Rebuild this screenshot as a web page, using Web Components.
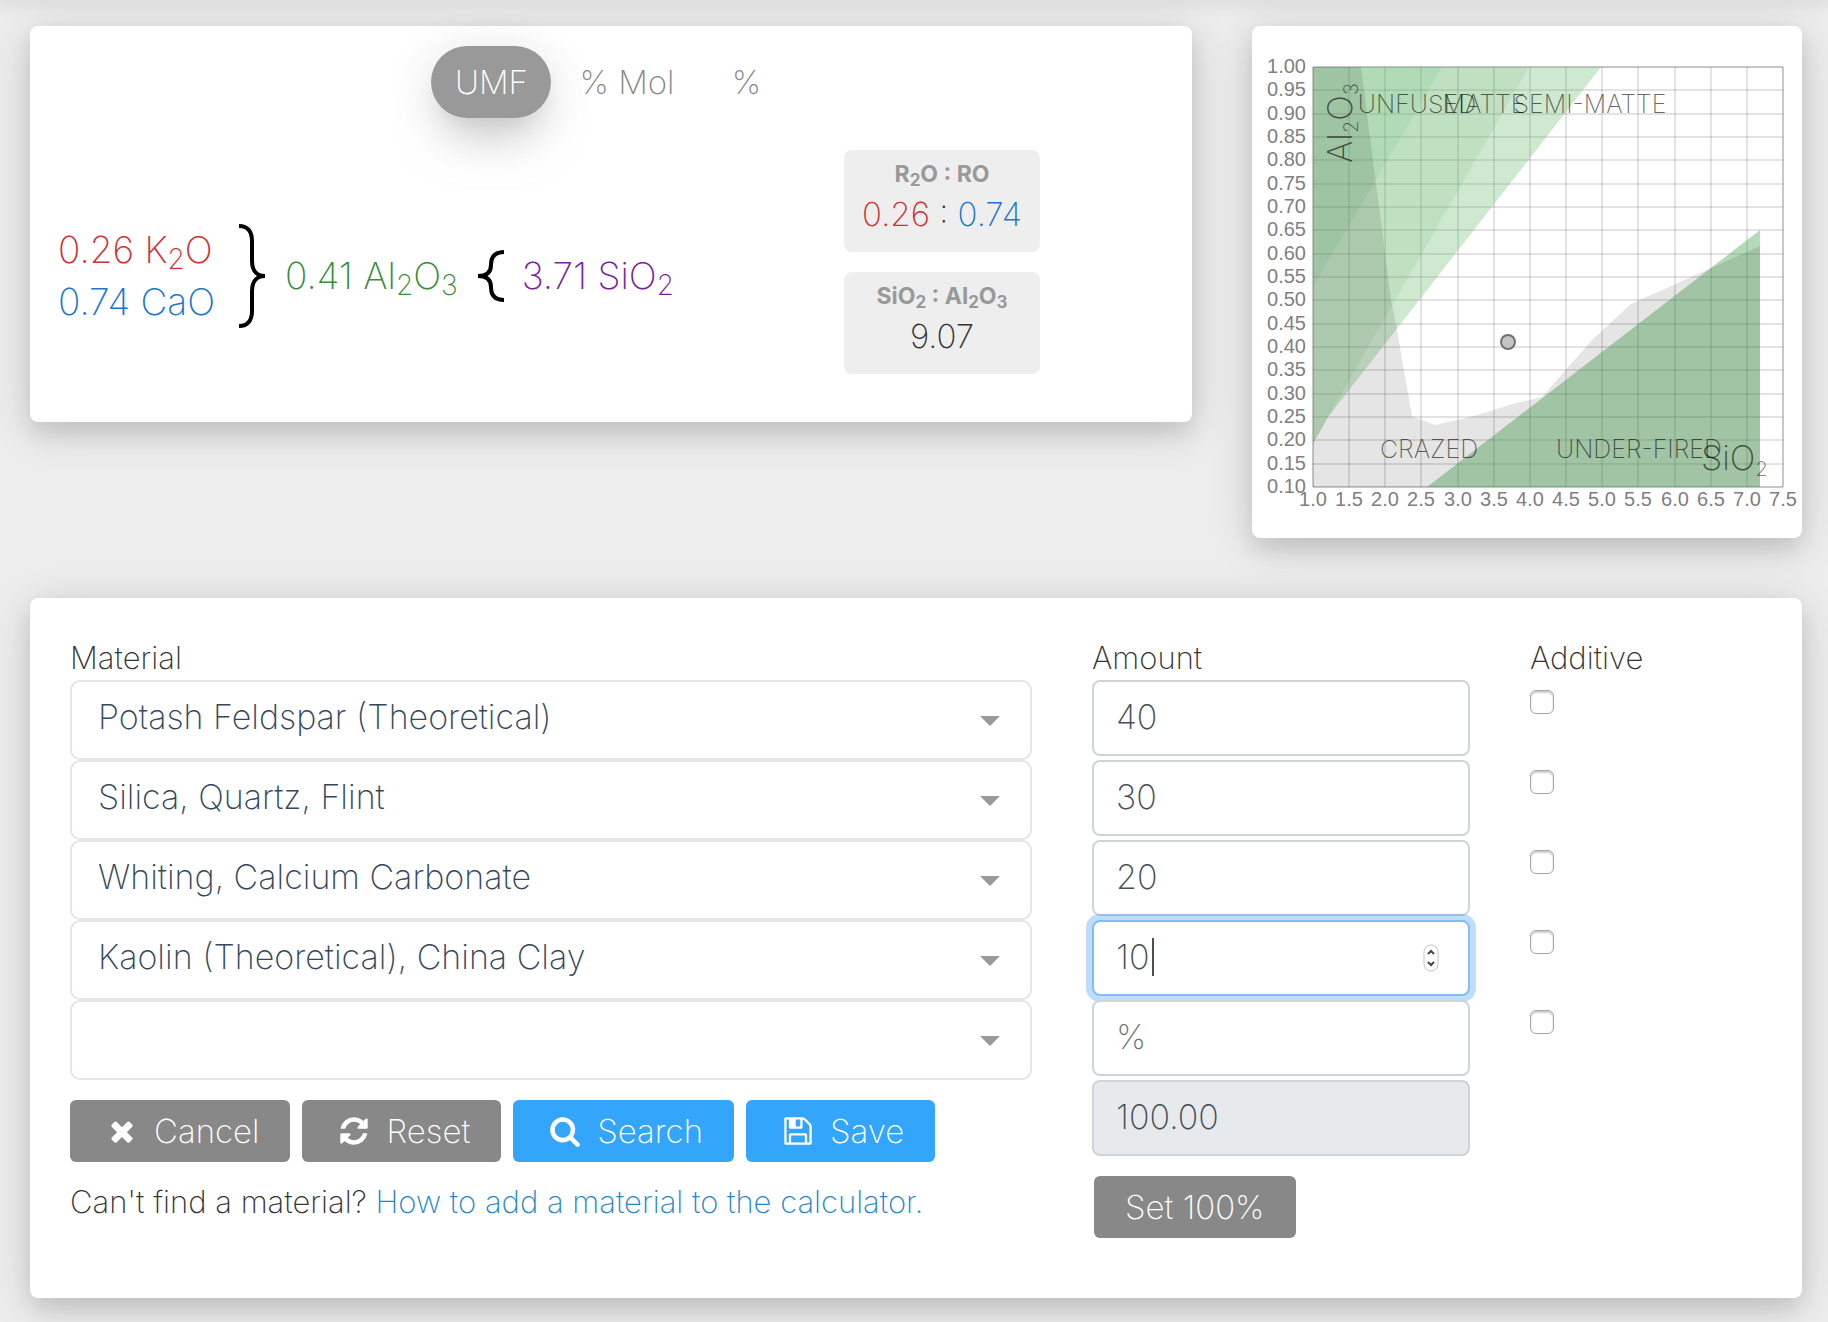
<!DOCTYPE html>
<html lang="en">
<head>
<meta charset="utf-8">
<title>Glaze calculator</title>
<style>
  html { background: #ededed; }
  body { margin: 0; color: #333; font: 250 31px/40px Inter, "Open Sans", sans-serif; }
</style>
</head>
<body>
<glaze-calculator></glaze-calculator>
<script>
const define = (tag, render) => customElements.define(tag, class extends HTMLElement {
  connectedCallback() {
    if (this.shadowRoot) return;
    const root = this.attachShadow({ mode: "open" });
    root.innerHTML = typeof render === "function" ? render(this) : render;
  }
});

/* ---------- white raised surface ---------- */
define("surface-card", `
<style>
  :host { display: block; background: #fff; border-radius: 8px;
    box-shadow: 0 8px 44px rgba(0,0,0,.16), 0 12px 20px rgba(0,0,0,.08); }
</style>
<slot></slot>`);

/* ---------- unit switcher ---------- */
define("unit-tabs", `
<style>
  :host { display: flex; justify-content: center; gap: 6px; }
  button { min-width: 88px; height: 72px; padding: 0 22px 1px; border: 0; border-radius: 36px; background: none;
    color: #888; font: inherit; font-size: 33px; }
  button[aria-pressed=true] { min-width: 120px; background: #999; color: #fff;
    box-shadow: 0 32px 52px -20px rgba(153,153,153,.56), 0 8px 50px rgba(0,0,0,.12), 0 16px 20px -10px rgba(153,153,153,.2); }
</style>
<button type="button" aria-pressed="true">UMF</button>
<button type="button" aria-pressed="false">% Mol</button>
<button type="button" aria-pressed="false">%</button>`);

/* ---------- unity formula ---------- */
define("umf-formula", `
<style>
  :host { display: flex; align-items: center; font-size: 37px; line-height: 52px; white-space: nowrap; }
  sub { font-size: 28px; line-height: 0; vertical-align: -6px; }
  svg { display: block; flex: none; fill: none; stroke: #000; stroke-width: 4; }
  .r2o { color: #d32f2f; } .ro { color: #1976d2; } .r2o3 { color: #388e3c; } .ro2 { color: #7b1fa2; }
  .open { margin: 0 20px 0 24px; } .close { margin: 0 18px 0 20px; }
</style>
<div><div class="r2o">0.26 K<sub>2</sub>O</div><div class="ro">0.74 CaO</div></div>
<svg class="open" width="26" height="104" viewBox="0 0 26 104"><path d="M0 2C9 2 13 8 13 17V37C13 47 18 52 26 52C18 52 13 57 13 67V87C13 96 9 102 0 102"/></svg>
<div class="r2o3">0.41 Al<sub>2</sub>O<sub>3</sub></div>
<svg class="close" width="26" height="52" viewBox="0 0 26 52"><path d="M26 2C17 2 13 7 13 15C13 22 9 26 0 26C9 26 13 30 13 37C13 45 17 50 26 50"/></svg>
<div class="ro2">3.71 SiO<sub>2</sub></div>`);

/* ---------- ratio tile ---------- */
define("ratio-box", `
<style>
  :host { display: block; box-sizing: border-box; width: 196px; height: 102px; padding: 8px 0; border-radius: 8px;
    background: #eee; text-align: center; font-size: 33px; line-height: 48px; }
  .title { color: #999; font-size: 23px; font-weight: 700; line-height: 32px; }
</style>
<div class="title"><slot name="title"></slot></div>
<div><slot></slot></div>`);

/* ---------- Stull chart ---------- */
define("stull-chart", () => {
  const x = v => Math.round(61 + (v - 1) * 470 / 6.5);
  const y = v => Math.round(461 - (v - 0.1) * 420 / 0.9);
  let lines = "", labels = "";
  for (let i = 0; i <= 13; i++) {
    const v = 1 + i / 2, edge = i === 0 || i === 13;
    lines += `<path ${edge ? 'class="edge"' : ""} d="M${x(v)} 41V461"/>`;
    labels += `<text text-anchor="middle" x="${x(v)}" y="480">${v.toFixed(1)}</text>`;
  }
  for (let i = 0; i <= 18; i++) {
    const v = 0.1 + i / 20, edge = i === 0 || i === 18;
    lines += `<path ${edge ? 'class="edge"' : ""} d="M61 ${y(v)}H531"/>`;
    labels += `<text text-anchor="end" x="54" y="${y(v) + 6}">${v.toFixed(2)}</text>`;
  }
  return `
<style>
  :host { display: block; }
  svg { display: block; width: 100%; height: auto; }
  .grid path { stroke: rgba(0,0,0,.11); stroke-width: 2; } .grid .edge { stroke: rgba(0,0,0,.22); }
  .ticks { font: 400 20px "Liberation Sans", sans-serif; fill: #808080; }
  .names { font-size: 25px; font-weight: 200; fill: rgba(0,0,0,.6); text-anchor: middle; }
  .axes { font-size: 34px; font-weight: 200; fill: rgba(0,0,0,.6); } .axes .sub { font-size: 20px; }
</style>
<svg viewBox="0 0 550 512" role="img" aria-label="Stull chart">
  <g class="grid">${lines}</g>
  <path fill="rgba(95,182,98,.3)" d="M61 41H349L76 391L61 418Z"/>
  <path fill="rgba(67,143,78,.1)" d="M61 41H277L76 391L61 418Z"/>
  <path fill="rgba(53,174,75,.1)" d="M61 41H190L61 261Z"/>
  <path fill="rgba(65,165,75,.4)" d="M175 461L508 204V461Z"/>
  <path fill="rgba(0,0,0,.1)" d="M61 41H109L139 274L145 304L160 390L183 399L222 390L264 377L290 371L340 314L379 278L508 220V461H61Z"/>
  <g class="ticks">${labels}</g>
  <g class="names">
    <text x="165" y="87">UNFUSED</text><text x="232" y="87">MATTE</text><text x="338" y="87">SEMI-MATTE</text>
    <text x="177" y="432">CRAZED</text><text x="387" y="432">UNDER-FIRED</text>
  </g>
  <g class="axes">
    <text transform="translate(100 137) rotate(-90)">Al<tspan class="sub" dy="6">2</tspan><tspan dy="-6">O</tspan><tspan class="sub" dy="6">3</tspan></text>
    <text x="449" y="444">SiO<tspan class="sub" dy="6">2</tspan></text>
  </g>
  <circle cx="256" cy="316" r="7" fill="#c4c4c4" stroke="#707070" stroke-width="2"/>
</svg>`;
});

/* ---------- buttons ---------- */
const icons = {
  times: "M1490 1322q0 40-28 68l-136 136q-28 28-68 28t-68-28l-294-294-294 294q-28 28-68 28t-68-28l-136-136q-28-28-28-68t28-68l294-294-294-294q-28-28-28-68t28-68l136-136q28-28 68-28t68 28l294 294 294-294q28-28 68-28t68 28l136 136q28 28 28 68t-28 68l-294 294 294 294q28 28 28 68z",
  refresh: "M1639 1056q0 5-1 7-64 268-268 434.5t-478 166.5q-146 0-282.5-55t-243.5-157l-129 129q-19 19-45 19t-45-19-19-45v-448q0-26 19-45t45-19h448q26 0 45 19t19 45-19 45l-137 137q71 66 161 102t187 36q134 0 250-65t186-179q11-17 53-117 8-23 30-23h192q13 0 22.5 9.5t9.5 22.5zm25-800v448q0 26-19 45t-45 19h-448q-26 0-45-19t-19-45 19-45l138-138q-148-137-349-137-134 0-250 65t-186 179q-11 17-53 117-8 23-30 23h-199q-13 0-22.5-9.5t-9.5-22.5v-7q65-268 270-434.5t480-166.5q146 0 284 55.5t245 156.5l130-129q19-19 45-19t45 19 19 45z",
  search: "M1216 832q0-185-131.5-316.5t-316.5-131.5-316.5 131.5-131.5 316.5 131.5 316.5 316.5 131.5 316.5-131.5 131.5-316.5zm512 832q0 52-38 90t-90 38q-54 0-90-38l-343-342q-179 124-399 124-143 0-273.5-55.5t-225-150-150-225-55.5-273.5 55.5-273.5 150-225 225-150 273.5-55.5 273.5 55.5 225 150 150 225 55.5 273.5q0 220-124 399l343 343q37 37 37 90z",
  save: "M512 1536h768v-384h-768v384zm896 0h128v-896q0-14-10-38.5t-20-34.5l-281-281q-10-10-34-20t-39-10v416q0 40-28 68t-68 28h-576q-40 0-68-28t-28-68v-416h-128v1280h128v-416q0-40 28-68t68-28h832q40 0 68 28t28 68v416zm-384-928v-320q0-13-9.5-22.5t-22.5-9.5h-192q-13 0-22.5 9.5t-9.5 22.5v320q0 13 9.5 22.5t22.5 9.5h192q13 0 22.5-9.5t9.5-22.5zm640 32v928q0 40-28 68t-68 28h-1344q-40 0-68-28t-28-68v-1344q0-40 28-68t68-28h928q40 0 88 20t76 48l280 280q28 28 48 76t20 88z"
};
define("action-button", el => `
<style>
  :host { display: block; }
  button { display: flex; align-items: center; gap: 16px; height: 62px; padding: 0 31px; border: 0; border-radius: 6px;
    background: #888; color: #fff; font: inherit; font-size: 33px; white-space: nowrap; }
  button.icon { padding-left: 36px; }
  :host([primary]) button { background: #33a6fb; }
  svg { width: 32px; height: 32px; fill: currentColor; }
</style>
<button type="button" class="${el.hasAttribute("icon") ? "icon" : ""}">${el.hasAttribute("icon") ? `<svg viewBox="0 0 1792 1792" aria-hidden="true"><path d="${icons[el.getAttribute("icon")]}"/></svg>` : ""}<span><slot></slot></span></button>`);

/* ---------- recipe form ---------- */
define("recipe-form", () => {
  const rows = [["Potash Feldspar (Theoretical)", "40"], ["Silica, Quartz, Flint", "30"],
    ["Whiting, Calcium Carbonate", "20"], ["Kaolin (Theoretical), China Clay", "10"], ["", ""]];
  const name = (kind, i) => i ? `aria-label="${kind} ${i + 1}"` : `id="${kind}"`;
  const selects = rows.map(([m], i) => `<div class="pick"><select ${name("Material", i)}><option>${m}</option></select></div>`).join("");
  const amounts = rows.map(([, a], i) => `<div class="amount${i === 3 ? " active" : ""}"><input type="number" placeholder="%" value="${a}" ${name("Amount", i)}>${i === 3 ?
    `<i class="caret"></i><svg class="spin" width="16" height="28" viewBox="0 0 16 28" aria-hidden="true"><rect x="1" y="1" width="14" height="26" rx="7"/><path d="M5 10l3-3 3 3M5 18l3 3 3-3"/></svg>` : ""}</div>`).join("");
  const checks = rows.map((_, i) => `<div class="check"><input type="checkbox" ${name("Additive", i)}></div>`).join("");
  return `
<style>
  :host { display: grid; grid-template-columns: 962fr 378fr 232fr; gap: 60px; padding: 40px 40px 60px; }
  label { display: block; height: 42px; line-height: 40px; }
  select, input { box-sizing: border-box; margin: 0; font: inherit; font-size: 34px; display: block; }
  .pick, .amount { position: relative; }
  .pick::after { content: ""; position: absolute; right: 32px; top: 36px; border: solid transparent; border-width: 10px 10px 0; border-top-color: #999; }
  select { appearance: none; width: 100%; height: 80px; padding: 0 60px 6px 26px; border: 2px solid #e6e6e6; border-radius: 10px; background: #fff; color: #35495e; }
  .amount { margin-bottom: 4px; }
  .amount input { appearance: textfield; width: 100%; height: 76px; padding: 0 22px 4px; border: 2px solid #ced4da; border-radius: 8px; background: #fff; color: #495057; }
  .amount input::-webkit-inner-spin-button { appearance: none; }
  .amount input::placeholder { color: #6c757d; opacity: 1; }
  .amount input:disabled { background: #e6eaed; }
  .amount.active input { border-color: #80bdff; box-shadow: 0 0 0 6px rgba(0,123,255,.25); }
  .caret { position: absolute; left: 60px; top: 18px; width: 2px; height: 38px; background: #495057; }
  .spin { position: absolute; right: 31px; top: 24px; fill: #fff; stroke: #c4c4c4; }
  .spin path { fill: none; stroke: #444; stroke-width: 2; }
  .check { height: 70px; padding-top: 10px; }
  .check input { appearance: none; width: 24px; height: 24px; border: 1px solid #a6a6a6; border-radius: 6px; background: #fff; box-shadow: inset 0 2px 2px rgba(0,0,0,.2); }
  .buttons { display: flex; flex-wrap: wrap; gap: 12px; margin-top: 20px; }
  .total { margin-bottom: 20px; }
  .set { display: flex; padding-left: 2px; }
  p { margin: 20px 0 0; }
  a { color: #2787cd; text-decoration: none; }
</style>
<section>
  <label for="Material">Material</label>${selects}
  <div class="buttons">
    <action-button icon="times">Cancel</action-button><action-button icon="refresh">Reset</action-button>
    <action-button primary icon="search">Search</action-button><action-button primary icon="save">Save</action-button>
  </div>
  <p>Can't find a material? <a href="#how">How to add a material to the calculator.</a></p>
</section>
<section>
  <label for="Amount">Amount</label>${amounts}
  <div class="amount total"><input type="text" aria-label="Total" value="100.00" disabled></div>
  <div class="set"><action-button>Set 100%</action-button></div>
</section>
<section><label for="Additive">Additive</label>${checks}</section>`;
});

/* ---------- page ---------- */
define("glaze-calculator", `
<style>
  :host { display: block; }
  header { height: 0; box-shadow: 0 0 16px 4px rgba(0,0,0,.12); }
  main { display: grid; grid-template-columns: 1162fr 550fr; gap: 60px; align-items: start; padding: 26px 26px 24px 30px; }
  .recipe { grid-column: 1 / -1; }
  .summary { padding: 20px 0; }
  .row { display: grid; grid-template-columns: 814fr 348fr; min-height: 252px; margin-top: 32px; }
  umf-formula { padding-left: 28px; }
  .ratios { display: grid; gap: 20px; align-content: start; }
  .r { color: #d32f2f; } .b { color: #1976d2; }
  sub { font-size: 17px; line-height: 0; vertical-align: -4px; }
</style>
<header></header>
<main>
  <surface-card><div class="summary">
    <unit-tabs></unit-tabs>
    <div class="row">
      <umf-formula></umf-formula>
      <div class="ratios">
        <ratio-box><span slot="title">R<sub>2</sub>O : RO</span><span class="r">0.26</span> : <span class="b">0.74</span></ratio-box>
        <ratio-box><span slot="title">SiO<sub>2</sub> : Al<sub>2</sub>O<sub>3</sub></span>9.07</ratio-box>
      </div>
    </div>
  </div></surface-card>
  <surface-card><stull-chart></stull-chart></surface-card>
  <surface-card class="recipe"><recipe-form></recipe-form></surface-card>
</main>`);
</script>
</body>
</html>
